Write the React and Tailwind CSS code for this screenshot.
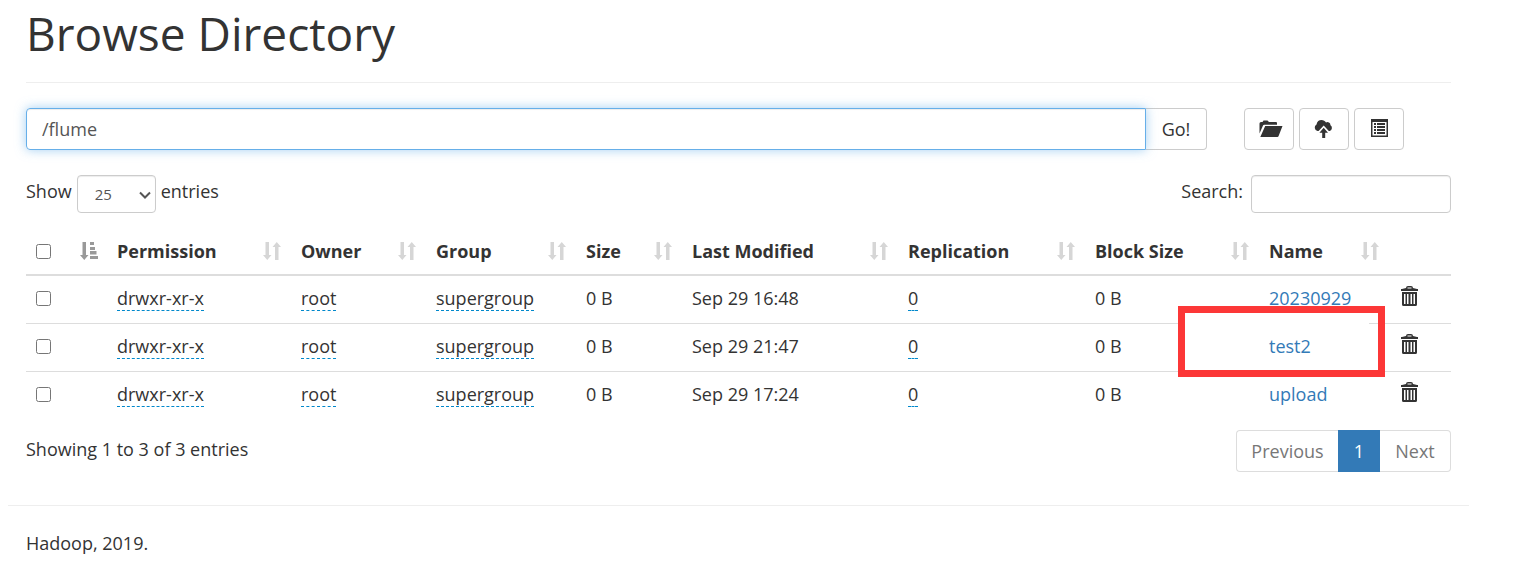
import React from "react";

const rows = [
  { time: "Sep 29 16:48", name: "20230929" },
  { time: "Sep 29 21:47", name: "test2", marked: true },
  { time: "Sep 29 17:24", name: "upload" },
];

const columns = ["Permission", "Owner", "Group", "Size", "Last Modified", "Replication", "Block Size", "Name"];

function SortBoth() {
  return (
    <svg className="h-[18px] w-[18px] shrink-0 text-[#d6d6d6]" viewBox="0 0 18 18" fill="currentColor" aria-hidden="true">
      <path d="M2.500 0H6v13h2.500l-4.250 5L0 13h2.500z" />
      <path d="M12 18h3.500V5H18l-4.250-5L9.500 5H12z" />
    </svg>
  );
}

function SortAsc() {
  return (
    <svg className="h-[18px] w-[18px] shrink-0 text-[#999]" viewBox="0 0 18 18" fill="currentColor" aria-hidden="true">
      <path d="M2.500 0H6v13h2.500l-4.250 5L0 13h2.500z" />
      <path d="M10 0h4v3h-4zM10 5h5v3h-5zM10 9h6.500v3.500H10zM10 14h8v3h-8z" />
    </svg>
  );
}

function FolderOpen() {
  return (
    <svg className="h-[18px] w-7" viewBox="-4 0 28 18" fill="#333" aria-hidden="true">
      <path d="M.5 13.500V3.500A1.500 1.500 0 0 1 2 2h1.500l1-1.500h4L10 2h7a1 1 0 0 1 1 1v1.700H5.300a1.500 1.500 0 0 0-1.400 1z" />
      <path d="M6.200 6H23.500l-4 10.200a1.200 1.200 0 0 1-1.100.8H1.300z" />
    </svg>
  );
}

function CloudUpload() {
  return (
    <svg className="h-5 w-5" viewBox="0 0 20 20" fill="#333" aria-hidden="true">
      <path d="M3.500 12a3.600 3.600 0 0 1-1-6.600C3 2.500 5 1 7.500 1c2 0 3.600 1 4.500 2.400a3.200 3.200 0 0 1 4.500 2.800A3.300 3.300 0 0 1 15.800 12h-1L9.700 6.600 4.600 12z" />
      <path d="M9.700 8.800 14 13.800h-2.800V19H8.200v-5.200H5.400z" />
    </svg>
  );
}

function ListAlt() {
  return (
    <svg className="h-5 w-[17px]" viewBox="0 0 17 20" fill="#333" aria-hidden="true">
      <path fillRule="evenodd" d="M0 0h17v18H0zM1.500 3v13.500h14V3z" />
      <path d="M3 4h2v2H3zM6 4h8v2H6zM3 7h2v2H3zM6 7h8v2H6zM3 10h2v2H3zM6 10h8v2H6zM3 13h2v2H3zM6 13h8v2H6z" />
    </svg>
  );
}

function Trash() {
  return (
    <svg className="h-5 w-[17px]" viewBox="0 0 17 20" fill="#333" aria-hidden="true">
      <path fillRule="evenodd" d="M0 3h1l4-1A2 2 0 0 1 7 0h3a2 2 0 0 1 2 2l4 1h1v2H0zM6.500 1.500V2.500h4V1.500z" />
      <path fillRule="evenodd" d="M1 6h15v12.500a1.500 1.500 0 0 1-1.500 1.500h-12A1.500 1.500 0 0 1 1 18.500zM3 8v10h1.500V8zM6 8v10h1.500V8zM9.500 8v10H11V8zM12.500 8v10H14V8z" />
    </svg>
  );
}

function Editable({ children }) {
  return <span className="inline-block border-b border-dashed border-[#08c] leading-6">{children}</span>;
}

const iconButton = "flex h-[42px] w-[50px] items-center justify-center rounded border border-[#ccc] bg-white";

export default function App() {
  return (
    <div className="mr-[59px] ml-2 font-['Open_Sans','Noto_Sans',sans-serif] text-[18px] leading-[26px] text-[#333]">
      <main className="px-[18px]">
        <h1 className="border-b border-[#eee] pt-[3px] pb-[19px] text-[46px] leading-[60px]">Browse Directory</h1>

        <div className="mt-[25px] flex gap-[37px]">
          <form className="flex min-w-0 flex-1" onSubmit={(e) => e.preventDefault()}>
            <input
              type="text"
              aria-label="Directory"
              defaultValue="/flume"
              className="relative h-[42px] min-w-0 flex-1 rounded-l border border-[#66afe9] px-[15px] text-[#555] shadow-[inset_0_1px_1px_rgba(0,0,0,0.075),0_0_11px_rgba(102,175,233,0.6)] outline-none"
            />
            <button type="submit" className="h-[42px] w-[61px] rounded-r border border-l-0 border-[#ccc] bg-white">
              Go!
            </button>
          </form>
          <div className="flex w-[207px] gap-[5px]">
            <button type="button" aria-label="Create directory" className={iconButton}><FolderOpen /></button>
            <button type="button" aria-label="Upload files" className={iconButton}><CloudUpload /></button>
            <button type="button" aria-label="Cut and paste" className={iconButton}><ListAlt /></button>
          </div>
        </div>

        <div className="mt-[25px] flex justify-between">
          <label className="flex items-start gap-[5px]">
            <span className="pt-[3px]">Show</span>
            <span className="relative">
              <select defaultValue="25" className="h-[38px] w-[79px] appearance-none rounded border border-[#ccc] bg-white pl-[17px] text-[15px] text-[#555] shadow-[inset_0_1px_1px_rgba(0,0,0,0.075)]">
                <option>10</option>
                <option>25</option>
                <option>50</option>
                <option>100</option>
              </select>
              <svg className="pointer-events-none absolute top-4 right-[5px] h-2 w-3" viewBox="0 0 12 8" fill="none" stroke="#555" strokeWidth="2" aria-hidden="true">
                <path d="M1 1.500 6 6.500 11 1.500" />
              </svg>
            </span>
            <span className="pt-[3px]">entries</span>
          </label>
          <label className="flex items-start gap-2">
            <span className="pt-[3px]">Search:</span>
            <input type="search" className="h-[38px] w-[200px] rounded border border-[#ccc] px-3 text-[15px] shadow-[inset_0_1px_1px_rgba(0,0,0,0.075)]" />
          </label>
        </div>

        <table className="mt-[15px] w-full table-fixed border-separate border-spacing-0 text-left">
          <colgroup>
            <col className="w-[81px]" />
            <col className="w-[184px]" />
            <col className="w-[135px]" />
            <col className="w-[150px]" />
            <col className="w-[106px]" />
            <col className="w-[216px]" />
            <col className="w-[187px]" />
            <col className="w-[174px]" />
            <col className="w-[130px]" />
            <col className="w-[62px]" />
          </colgroup>
          <thead>
            <tr>
              <th className="border-b-2 border-[#ddd] py-[10px] pr-[9px] pl-[10px]">
                <span className="flex items-center justify-between">
                  <input type="checkbox" aria-label="Select all" className="h-[15px] w-[15px]" />
                  <SortAsc />
                </span>
              </th>
              {columns.map((c) => (
                <th key={c} className="border-b-2 border-[#ddd] px-[10px] py-[10px] font-bold whitespace-nowrap">
                  <span className="flex items-center justify-between">
                    {c}
                    <SortBoth />
                  </span>
                </th>
              ))}
              <th className="border-b-2 border-[#ddd]" />
            </tr>
          </thead>
          <tbody className="[&>tr+tr>td]:h-12 [&>tr+tr>td]:border-t [&>tr+tr>td]:border-[#ddd] [&>tr>td]:h-[47px] [&>tr>td]:px-[10px] [&>tr>td]:pb-[3px] [&>tr>td]:whitespace-nowrap">
            {rows.map((r) => (
              <tr key={r.name}>
                <td><input type="checkbox" aria-label={"Select " + r.name} className="block h-[15px] w-[15px]" /></td>
                <td><Editable>drwxr-xr-x</Editable></td>
                <td><Editable>root</Editable></td>
                <td><Editable>supergroup</Editable></td>
                <td>0 B</td>
                <td>{r.time}</td>
                <td><Editable>0</Editable></td>
                <td>0 B</td>
                <td className="relative">
                  {r.marked && (
                    <span className="pointer-events-none absolute -top-[18px] -left-[81px] z-10 h-[71px] w-[207px] border-[7px] border-[#fc3737]">
                      <span className="mt-[9px] block h-[3px] w-[184px] bg-white" />
                    </span>
                  )}
                  <a href="#" className="text-[#337ab7]">{r.name}</a>
                </td>
                <td>
                  <button type="button" aria-label={"Delete " + r.name} className="ml-[2px] block pb-1"><Trash /></button>
                </td>
              </tr>
            ))}
          </tbody>
        </table>

        <div className="mt-[11px] flex items-start justify-between">
          <p className="pt-[6px]">Showing 1 to 3 of 3 entries</p>
          <nav aria-label="Pages" className="flex h-[42px] text-[#777]">
            <a href="#" className="flex w-[102px] items-center justify-center rounded-l border border-r-0 border-[#ddd]">Previous</a>
            <a href="#" className="flex w-[42px] items-center justify-center bg-[#337ab7] text-white">1</a>
            <a href="#" className="flex w-[71px] items-center justify-center rounded-r border border-l-0 border-[#ddd]">Next</a>
          </nav>
        </div>
      </main>

      <footer className="mt-[33px] border-t border-[#eee] px-[18px] pt-6 pb-4">
        <p>Hadoop, 2019.</p>
      </footer>
    </div>
  );
}
